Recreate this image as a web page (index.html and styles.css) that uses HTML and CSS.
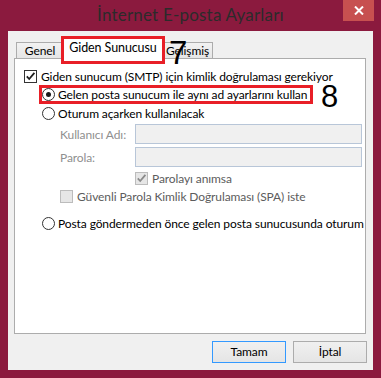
FILE: index.html
```html
<!DOCTYPE html>
<html>
<head>
  <meta charset="UTF-8">
  <link rel="stylesheet" href="styles.css">
</head>
<body>
  <div class="window">
    <div class="titlebar">
      <div class="title">İnternet E-posta Ayarları</div>
      <div class="close">
        <svg width="10" height="9" viewBox="0 0 10 9"><path d="M1 0.5 L9 8.5 M9 0.5 L1 8.5" stroke="#fff" stroke-width="2"/></svg>
      </div>
    </div>
    <div class="client">
      <div class="tabs">
        <div class="tab tab-genel">Genel</div>
        <div class="tab tab-active">Giden Sunucusu</div>
        <div class="tab tab-gelismis">Gelişmiş</div>
        <span class="mark mark-7">7</span>
      </div>
      <div class="panel">
        <div class="row row-auth">
          <span class="check"><svg width="11" height="11" viewBox="0 0 11 11"><path d="M1.8 5.4 L4.2 8 L9.4 1.8" fill="none" stroke="#1e1e1e" stroke-width="1.8"/></svg></span>
          <span class="label">Giden sunucum (SMTP) için kimlik doğrulaması gerekiyor</span>
        </div>
        <div class="row row-same indent-1">
          <span class="radio checked"></span>
          <span class="label">Gelen posta sunucum ile aynı ad ayarlarını kullan</span>
          <span class="mark mark-8">8</span>
        </div>
        <div class="row row-logon indent-1">
          <span class="radio"></span>
          <span class="label">Oturum açarken kullanılacak</span>
        </div>
        <div class="field field-user indent-2">
          <span class="field-label">Kullanıcı Adı:</span>
          <span class="input"></span>
        </div>
        <div class="field field-pass indent-2">
          <span class="field-label">Parola:</span>
          <span class="input"></span>
        </div>
        <div class="row row-remember indent-3">
          <span class="check disabled"><svg width="11" height="11" viewBox="0 0 11 11"><path d="M1.8 5.4 L4.2 8 L9.4 1.8" fill="none" stroke="#8a8a8a" stroke-width="1.8"/></svg></span>
          <span class="label dim">Parolayı anımsa</span>
        </div>
        <div class="row row-spa indent-2">
          <span class="check disabled"></span>
          <span class="label dim">Güvenli Parola Kimlik Doğrulaması (SPA) iste</span>
        </div>
        <div class="row row-before indent-1">
          <span class="radio"></span>
          <span class="label">Posta göndermeden önce gelen posta sunucusunda oturum açın</span>
        </div>
      </div>
      <div class="buttons">
        <div class="button default">Tamam</div>
        <div class="button">İptal</div>
      </div>
    </div>
  </div>
</body>
</html>
```

FILE: styles.css
```css
body {
  margin: 0;
  padding: 0;
  background: #8b1a3e;
  font-family: Lato, "Noto Sans", sans-serif;
  font-size: 12px;
  letter-spacing: -0.1px;
  color: #000000;
}

.window {
  width: 381px;
  height: 378px;
  display: flex;
  flex-direction: column;
  background: #8b1a3e;
  overflow: hidden;
}

.titlebar {
  height: 31px;
  display: grid;
  grid-template-columns: 1fr auto 1fr;
  align-items: start;
}

.title {
  grid-column: 2;
  font-size: 17px;
  letter-spacing: 0.2px;
  line-height: 30px;
  color: #2b2b2b;
  white-space: nowrap;
}

.close {
  grid-column: 3;
  justify-self: end;
  width: 31px;
  height: 21px;
  margin-right: 7px;
  background: #c75050;
  display: flex;
  align-items: center;
  justify-content: center;
}

.client {
  flex: 1;
  margin: 0 8px 8px 8px;
  padding: 7px 6px 0 6px;
  background: #f0f0f0;
  display: flex;
  flex-direction: column;
}

/* tabs */
.tabs {
  height: 20px;
  display: flex;
  align-items: flex-end;
  padding-left: 2px;
  position: relative;
  z-index: 2;
}

.tab {
  box-sizing: border-box;
  height: 16px;
  border: 1px solid #acacac;
  border-bottom: none;
  background: linear-gradient(#f2f2f2, #e6e6e6);
  text-align: center;
  line-height: 15px;
  white-space: nowrap;
}

.tab-genel {
  width: 47px;
  border-right: none;
}

.tab-gelismis {
  width: 50px;
  border-left: none;
}

.tab-active {
  width: 104px;
  height: 21px;
  margin: 0 -2px -1px -2px;
  background: #ffffff;
  line-height: 18px;
  font-size: 12.5px;
  position: relative;
}

.tab-active::after {
  content: "";
  position: absolute;
  left: -1px;
  right: -1px;
  top: -3px;
  bottom: -5px;
  border: 3px solid #e81f27;
}

.mark {
  position: absolute;
  font-family: "Liberation Sans", sans-serif;
  color: #000000;
  line-height: 1;
  letter-spacing: 0;
}

.mark-7 {
  left: 155px;
  top: -2px;
  font-size: 33px;
}

.mark-8 {
  left: 279px;
  top: -5px;
  font-size: 31px;
}

/* panel */
.panel {
  box-sizing: border-box;
  width: 352px;
  height: 276px;
  border: 1px solid #acacac;
  background: #ffffff;
  padding: 8px 0 0 9px;
  overflow: hidden;
  position: relative;
}

.row {
  height: 17px;
  display: flex;
  align-items: center;
  white-space: nowrap;
}

.indent-1 { margin-left: 18px; }
.indent-2 { margin-left: 36px; }
.indent-3 { margin-left: 111px; }

.row-auth { margin-top: 1px; }

.row-same {
  margin-top: 1px;
  position: relative;
}

.row-same::after {
  content: "";
  position: absolute;
  left: -3px;
  top: -1px;
  width: 268px;
  height: 13px;
  border: 3px solid #e81f27;
}

.row-logon { margin-top: 2px; }
.field-user { margin-top: 2px; }
.field-pass { margin-top: 3px; }
.row-remember { margin-top: 3px; }
.row-spa { margin-top: 1px; }
.row-before { margin-top: 10px; }

.check {
  box-sizing: border-box;
  width: 13px;
  height: 13px;
  border: 1px solid #333333;
  background: #ffffff;
  display: flex;
  align-items: center;
  justify-content: center;
  margin-right: 4px;
  flex-shrink: 0;
}

.check.disabled {
  border-color: #bcbcbc;
  background: #e6e6e6;
}

.radio {
  box-sizing: border-box;
  width: 13px;
  height: 13px;
  border: 1px solid #333333;
  border-radius: 50%;
  background: #ffffff;
  display: flex;
  align-items: center;
  justify-content: center;
  margin-right: 3px;
  flex-shrink: 0;
}

.radio.checked::after {
  content: "";
  width: 5px;
  height: 5px;
  border-radius: 50%;
  background: #1a1a1a;
}

.label.dim {
  color: #5c5c5c;
}

.field {
  height: 20px;
  display: flex;
  align-items: center;
}

.field-label {
  width: 75px;
  color: #8f8f8f;
  white-space: nowrap;
}

.input {
  box-sizing: border-box;
  width: 227px;
  height: 20px;
  border: 1px solid #b8c6d8;
  background: #f0f0f0;
  flex-shrink: 0;
}

/* buttons */
.buttons {
  display: flex;
  justify-content: flex-end;
  gap: 7px;
  margin-top: 7px;
}

.button {
  box-sizing: border-box;
  width: 74px;
  height: 22px;
  border: 1px solid #acacac;
  background: linear-gradient(#f0f0f0, #e5e5e5);
  text-align: center;
  line-height: 20px;
}

.button.default {
  border-color: #3399ff;
}
```
